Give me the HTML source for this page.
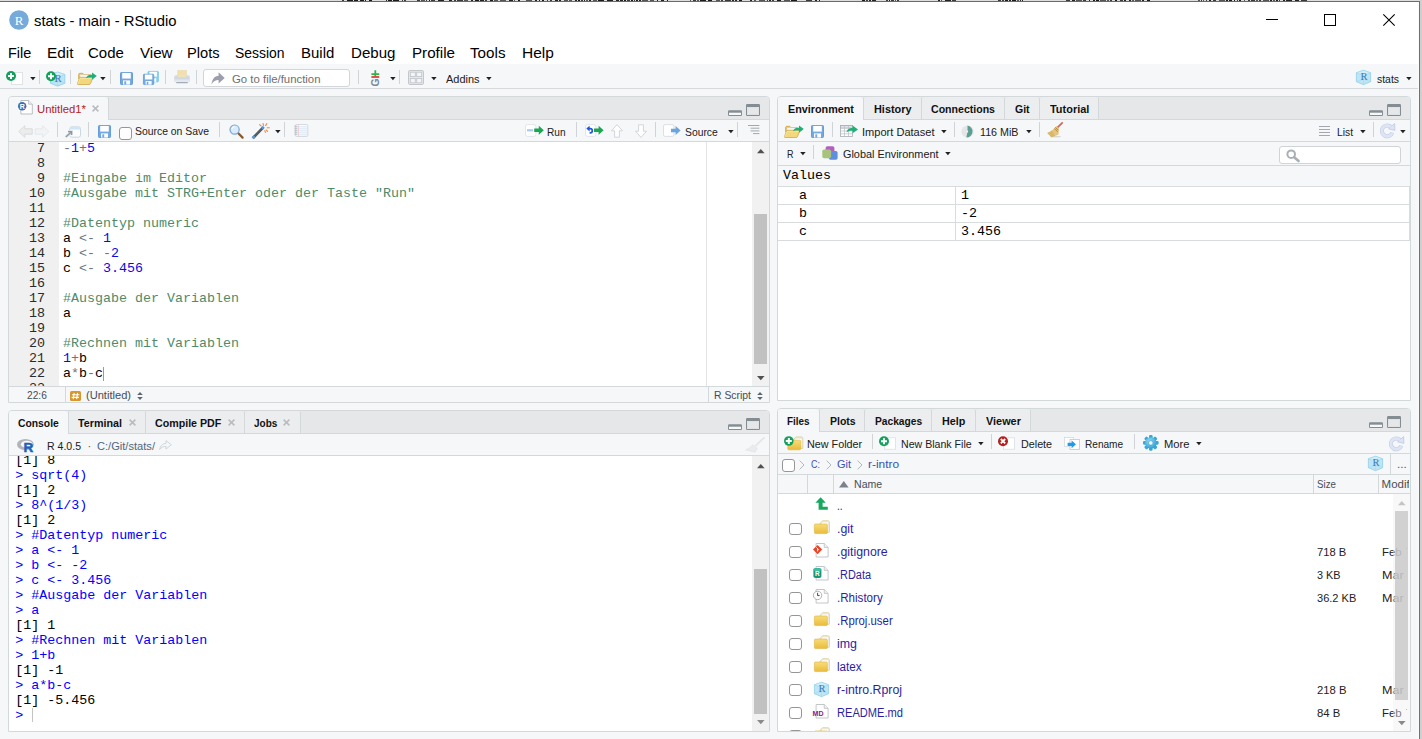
<!DOCTYPE html>
<html lang="de"><head><meta charset="utf-8"><title>stats - main - RStudio</title>
<style>
html,body{margin:0;padding:0}
body{width:1422px;height:739px;overflow:hidden;position:relative;background:#f5f7f9;font-family:"Liberation Sans",sans-serif}
#root{position:absolute;left:0;top:0;width:1422px;height:739px;overflow:hidden}
#root div,#root svg,#root span{position:absolute}
#root div{box-sizing:border-box}
.t{white-space:pre;line-height:20px;height:20px;transform-origin:0 50%}
.ts{font-family:"Liberation Sans",sans-serif}
.tb{font-family:"Liberation Sans",sans-serif;font-weight:bold}
.tm{font-family:"Liberation Mono",monospace}
svg{overflow:visible}
</style></head>
<body><div id="root">
<svg width="0" height="0" style="left:0;top:0"><defs><linearGradient id="fg" x1="0" y1="0" x2="0" y2="1"><stop offset="0" stop-color="#f8dd78"/><stop offset="1" stop-color="#e9bb3b"/></linearGradient><radialGradient id="gg" cx=".4" cy=".35" r=".7"><stop offset="0" stop-color="#8fdcf2"/><stop offset="1" stop-color="#2f9dd0"/></radialGradient></defs></svg>
<div style="left:0px;top:0px;width:1422px;height:64px;background:#fff;"></div>
<div style="left:0px;top:0px;width:1422px;height:1px;background:#dedede;"></div>
<div style="left:342px;top:0px;width:2px;height:1px;background:#3a3a3a;"></div>
<div style="left:347px;top:0px;width:6px;height:1px;background:#1a1a1a;"></div>
<div style="left:354px;top:0px;width:4px;height:1px;background:#1a1a1a;"></div>
<div style="left:360px;top:0px;width:4px;height:1px;background:#1a1a1a;"></div>
<div style="left:365px;top:0px;width:1px;height:1px;background:#1a1a1a;"></div>
<div style="left:369px;top:0px;width:3px;height:1px;background:#1a1a1a;"></div>
<div style="left:386px;top:0px;width:1px;height:1px;background:#222;"></div>
<div style="left:388px;top:0px;width:4px;height:1px;background:#1a1a1a;"></div>
<div style="left:393px;top:0px;width:6px;height:1px;background:#1a1a1a;"></div>
<div style="left:402px;top:0px;width:1px;height:1px;background:#3a3a3a;"></div>
<div style="left:404px;top:0px;width:2px;height:1px;background:#3a3a3a;"></div>
<div style="left:417px;top:0px;width:3px;height:1px;background:#3a3a3a;"></div>
<div style="left:421px;top:0px;width:4px;height:1px;background:#555;"></div>
<div style="left:426px;top:0px;width:1px;height:1px;background:#3a3a3a;"></div>
<div style="left:429px;top:0px;width:1px;height:1px;background:#1a1a1a;"></div>
<div style="left:431px;top:0px;width:4px;height:1px;background:#3a3a3a;"></div>
<div style="left:438px;top:0px;width:6px;height:1px;background:#222;"></div>
<div style="left:449px;top:0px;width:3px;height:1px;background:#222;"></div>
<div style="left:454px;top:0px;width:2px;height:1px;background:#3a3a3a;"></div>
<div style="left:457px;top:0px;width:6px;height:1px;background:#3a3a3a;"></div>
<div style="left:464px;top:0px;width:4px;height:1px;background:#555;"></div>
<div style="left:471px;top:0px;width:2px;height:1px;background:#222;"></div>
<div style="left:475px;top:0px;width:4px;height:1px;background:#1a1a1a;"></div>
<div style="left:480px;top:0px;width:4px;height:1px;background:#222;"></div>
<div style="left:485px;top:0px;width:2px;height:1px;background:#3a3a3a;"></div>
<div style="left:490px;top:0px;width:3px;height:1px;background:#1a1a1a;"></div>
<div style="left:494px;top:0px;width:4px;height:1px;background:#555;"></div>
<div style="left:500px;top:0px;width:6px;height:1px;background:#555;"></div>
<div style="left:509px;top:0px;width:4px;height:1px;background:#222;"></div>
<div style="left:514px;top:0px;width:1px;height:1px;background:#555;"></div>
<div style="left:518px;top:0px;width:2px;height:1px;background:#1a1a1a;"></div>
<div style="left:526px;top:0px;width:6px;height:1px;background:#555;"></div>
<div style="left:535px;top:0px;width:2px;height:1px;background:#222;"></div>
<div style="left:539px;top:0px;width:1px;height:1px;background:#222;"></div>
<div style="left:542px;top:0px;width:2px;height:1px;background:#1a1a1a;"></div>
<div style="left:547px;top:0px;width:1px;height:1px;background:#3a3a3a;"></div>
<div style="left:550px;top:0px;width:2px;height:1px;background:#3a3a3a;"></div>
<div style="left:555px;top:0px;width:3px;height:1px;background:#222;"></div>
<div style="left:559px;top:0px;width:2px;height:1px;background:#222;"></div>
<div style="left:564px;top:0px;width:4px;height:1px;background:#555;"></div>
<div style="left:569px;top:0px;width:3px;height:1px;background:#555;"></div>
<div style="left:575px;top:0px;width:2px;height:1px;background:#222;"></div>
<div style="left:578px;top:0px;width:2px;height:1px;background:#1a1a1a;"></div>
<div style="left:581px;top:0px;width:2px;height:1px;background:#3a3a3a;"></div>
<div style="left:584px;top:0px;width:1px;height:1px;background:#222;"></div>
<div style="left:586px;top:0px;width:2px;height:1px;background:#555;"></div>
<div style="left:589px;top:0px;width:2px;height:1px;background:#222;"></div>
<div style="left:593px;top:0px;width:4px;height:1px;background:#555;"></div>
<div style="left:598px;top:0px;width:6px;height:1px;background:#1a1a1a;"></div>
<div style="left:607px;top:0px;width:6px;height:1px;background:#222;"></div>
<div style="left:616px;top:0px;width:3px;height:1px;background:#222;"></div>
<div style="left:620px;top:0px;width:3px;height:1px;background:#222;"></div>
<div style="left:624px;top:0px;width:2px;height:1px;background:#1a1a1a;"></div>
<div style="left:627px;top:0px;width:3px;height:1px;background:#3a3a3a;"></div>
<div style="left:631px;top:0px;width:2px;height:1px;background:#1a1a1a;"></div>
<div style="left:634px;top:0px;width:1px;height:1px;background:#3a3a3a;"></div>
<div style="left:636px;top:0px;width:2px;height:1px;background:#1a1a1a;"></div>
<div style="left:639px;top:0px;width:2px;height:1px;background:#222;"></div>
<div style="left:642px;top:0px;width:6px;height:1px;background:#555;"></div>
<div style="left:650px;top:0px;width:4px;height:1px;background:#555;"></div>
<div style="left:657px;top:0px;width:1px;height:1px;background:#1a1a1a;"></div>
<div style="left:661px;top:0px;width:3px;height:1px;background:#222;"></div>
<div style="left:667px;top:0px;width:1px;height:1px;background:#1a1a1a;"></div>
<div style="left:690px;top:0px;width:1px;height:1px;background:#555;"></div>
<div style="left:693px;top:0px;width:3px;height:1px;background:#3a3a3a;"></div>
<div style="left:697px;top:0px;width:2px;height:1px;background:#555;"></div>
<div style="left:700px;top:0px;width:6px;height:1px;background:#1a1a1a;"></div>
<div style="left:708px;top:0px;width:4px;height:1px;background:#1a1a1a;"></div>
<div style="left:716px;top:0px;width:4px;height:1px;background:#555;"></div>
<div style="left:721px;top:0px;width:2px;height:1px;background:#3a3a3a;"></div>
<div style="left:725px;top:0px;width:6px;height:1px;background:#3a3a3a;"></div>
<div style="left:732px;top:0px;width:2px;height:1px;background:#222;"></div>
<div style="left:735px;top:0px;width:2px;height:1px;background:#222;"></div>
<div style="left:739px;top:0px;width:3px;height:1px;background:#1a1a1a;"></div>
<div style="left:750px;top:0px;width:2px;height:1px;background:#222;"></div>
<div style="left:754px;top:0px;width:2px;height:1px;background:#555;"></div>
<div style="left:759px;top:0px;width:6px;height:1px;background:#555;"></div>
<div style="left:767px;top:0px;width:1px;height:1px;background:#3a3a3a;"></div>
<div style="left:769px;top:0px;width:2px;height:1px;background:#222;"></div>
<div style="left:772px;top:0px;width:2px;height:1px;background:#3a3a3a;"></div>
<div style="left:777px;top:0px;width:4px;height:1px;background:#1a1a1a;"></div>
<div style="left:784px;top:0px;width:6px;height:1px;background:#555;"></div>
<div style="left:791px;top:0px;width:6px;height:1px;background:#1a1a1a;"></div>
<div style="left:806px;top:0px;width:6px;height:1px;background:#3a3a3a;"></div>
<div style="left:815px;top:0px;width:2px;height:1px;background:#222;"></div>
<div style="left:819px;top:0px;width:1px;height:1px;background:#222;"></div>
<div style="left:862px;top:0px;width:3px;height:1px;background:#1a1a1a;"></div>
<div style="left:866px;top:0px;width:2px;height:1px;background:#3a3a3a;"></div>
<div style="left:869px;top:0px;width:2px;height:1px;background:#222;"></div>
<div style="left:872px;top:0px;width:4px;height:1px;background:#222;"></div>
<div style="left:886px;top:0px;width:2px;height:1px;background:#3a3a3a;"></div>
<div style="left:889px;top:0px;width:1px;height:1px;background:#1a1a1a;"></div>
<div style="left:891px;top:0px;width:3px;height:1px;background:#3a3a3a;"></div>
<div style="left:895px;top:0px;width:1px;height:1px;background:#555;"></div>
<div style="left:897px;top:0px;width:2px;height:1px;background:#3a3a3a;"></div>
<div style="left:938px;top:0px;width:2px;height:1px;background:#222;"></div>
<div style="left:941px;top:0px;width:1px;height:1px;background:#555;"></div>
<div style="left:945px;top:0px;width:6px;height:1px;background:#222;"></div>
<div style="left:952px;top:0px;width:4px;height:1px;background:#3a3a3a;"></div>
<div style="left:998px;top:0px;width:3px;height:1px;background:#3a3a3a;"></div>
<div style="left:1002px;top:0px;width:2px;height:1px;background:#3a3a3a;"></div>
<div style="left:1005px;top:0px;width:3px;height:1px;background:#1a1a1a;"></div>
<div style="left:1009px;top:0px;width:2px;height:1px;background:#222;"></div>
<div style="left:1012px;top:0px;width:4px;height:1px;background:#1a1a1a;"></div>
<div style="left:1017px;top:0px;width:2px;height:1px;background:#555;"></div>
<div style="left:1020px;top:0px;width:1px;height:1px;background:#222;"></div>
<div style="left:1022px;top:0px;width:1px;height:1px;background:#222;"></div>
<div style="left:1066px;top:0px;width:4px;height:1px;background:#3a3a3a;"></div>
<div style="left:1072px;top:0px;width:3px;height:1px;background:#222;"></div>
<div style="left:1076px;top:0px;width:6px;height:1px;background:#555;"></div>
<div style="left:1083px;top:0px;width:3px;height:1px;background:#3a3a3a;"></div>
<div style="left:1089px;top:0px;width:1px;height:1px;background:#222;"></div>
<div style="left:1093px;top:0px;width:2px;height:1px;background:#1a1a1a;"></div>
<div style="left:1096px;top:0px;width:3px;height:1px;background:#1a1a1a;"></div>
<div style="left:1100px;top:0px;width:6px;height:1px;background:#555;"></div>
<div style="left:1107px;top:0px;width:2px;height:1px;background:#555;"></div>
<div style="left:1110px;top:0px;width:2px;height:1px;background:#3a3a3a;"></div>
<div style="left:1115px;top:0px;width:2px;height:1px;background:#1a1a1a;"></div>
<div style="left:1120px;top:0px;width:3px;height:1px;background:#3a3a3a;"></div>
<div style="left:1124px;top:0px;width:2px;height:1px;background:#222;"></div>
<div style="left:1129px;top:0px;width:2px;height:1px;background:#222;"></div>
<div style="left:1132px;top:0px;width:2px;height:1px;background:#555;"></div>
<div style="left:1135px;top:0px;width:6px;height:1px;background:#555;"></div>
<div style="left:1142px;top:0px;width:2px;height:1px;background:#222;"></div>
<div style="left:1147px;top:0px;width:3px;height:1px;background:#1a1a1a;"></div>
<div style="left:1198px;top:0px;width:2px;height:1px;background:#555;"></div>
<div style="left:1201px;top:0px;width:1px;height:1px;background:#3a3a3a;"></div>
<div style="left:1203px;top:0px;width:1px;height:1px;background:#555;"></div>
<div style="left:1206px;top:0px;width:1px;height:1px;background:#3a3a3a;"></div>
<div style="left:1209px;top:0px;width:2px;height:1px;background:#222;"></div>
<div style="left:1213px;top:0px;width:3px;height:1px;background:#3a3a3a;"></div>
<div style="left:1219px;top:0px;width:6px;height:1px;background:#555;"></div>
<div style="left:1226px;top:0px;width:2px;height:1px;background:#1a1a1a;"></div>
<div style="left:1229px;top:0px;width:3px;height:1px;background:#1a1a1a;"></div>
<div style="left:1234px;top:0px;width:1px;height:1px;background:#1a1a1a;"></div>
<div style="left:1237px;top:0px;width:1px;height:1px;background:#3a3a3a;"></div>
<div style="left:1239px;top:0px;width:2px;height:1px;background:#1a1a1a;"></div>
<div style="left:1244px;top:0px;width:1px;height:1px;background:#555;"></div>
<div style="left:1248px;top:0px;width:2px;height:1px;background:#3a3a3a;"></div>
<div style="left:1251px;top:0px;width:4px;height:1px;background:#3a3a3a;"></div>
<div style="left:1256px;top:0px;width:2px;height:1px;background:#555;"></div>
<div style="left:1259px;top:0px;width:2px;height:1px;background:#3a3a3a;"></div>
<div style="left:1263px;top:0px;width:6px;height:1px;background:#555;"></div>
<div style="left:1270px;top:0px;width:2px;height:1px;background:#222;"></div>
<div style="left:1273px;top:0px;width:2px;height:1px;background:#555;"></div>
<div style="left:1276px;top:0px;width:2px;height:1px;background:#1a1a1a;"></div>
<div style="left:1279px;top:0px;width:1px;height:1px;background:#3a3a3a;"></div>
<div style="left:1283px;top:0px;width:2px;height:1px;background:#222;"></div>
<div style="left:1286px;top:0px;width:6px;height:1px;background:#222;"></div>
<div style="left:1295px;top:0px;width:4px;height:1px;background:#222;"></div>
<div style="left:1301px;top:0px;width:6px;height:1px;background:#3a3a3a;"></div>
<div style="left:0px;top:1px;width:1420px;height:1px;background:#6a6a6a;"></div>
<div style="left:1418px;top:2px;width:1px;height:737px;background:#fbfbfb;"></div>
<div style="left:1419px;top:1px;width:1px;height:738px;background:#707070;"></div>
<div style="left:1420px;top:0px;width:2px;height:739px;background:#cfcfcf;"></div>
<svg style="left:9px;top:10px;" width="20" height="20" viewBox="0 0 20 20"><circle cx="10" cy="10" r="9.800" fill="#75aadb"/><text x="10.200" y="14.600" font-family="Liberation Serif,serif" font-size="13" text-anchor="middle" fill="#fff">R</text></svg>
<span id="t0" class="t ts" style="left:34px;top:10.80px;font-size:15px;color:#000;transform:scaleX(0.9881);">stats - main - RStudio</span>
<div style="left:1266px;top:19px;width:12px;height:1px;background:#000;"></div>
<div style="left:1324px;top:14px;width:12px;height:12px;background:transparent;border:1px solid #000"></div>
<svg style="left:1383px;top:14px;" width="12" height="12" viewBox="0 0 12 12"><path d="M0.300 0.300L11.700 11.700M11.700 0.300L0.300 11.700" stroke="#000" stroke-width="1.100"/></svg>
<span id="t1" class="t ts" style="left:7.500000000000001px;top:42.87px;font-size:14.5px;color:#000;transform:scaleX(0.9968);">File</span>
<span id="t2" class="t ts" style="left:46.5px;top:42.87px;font-size:14.5px;color:#000;transform:scaleX(1.0600);">Edit</span>
<span id="t3" class="t ts" style="left:88.2px;top:42.87px;font-size:14.5px;color:#000;transform:scaleX(1.0325);">Code</span>
<span id="t4" class="t ts" style="left:139.5px;top:42.87px;font-size:14.5px;color:#000;transform:scaleX(1.0426);">View</span>
<span id="t5" class="t ts" style="left:187.39999999999998px;top:42.87px;font-size:14.5px;color:#000;transform:scaleX(1.0109);">Plots</span>
<span id="t6" class="t ts" style="left:235.2px;top:42.87px;font-size:14.5px;color:#000;transform:scaleX(0.9614);">Session</span>
<span id="t7" class="t ts" style="left:300.9px;top:42.87px;font-size:14.5px;color:#000;transform:scaleX(1.0326);">Build</span>
<span id="t8" class="t ts" style="left:350.9px;top:42.87px;font-size:14.5px;color:#000;transform:scaleX(1.0390);">Debug</span>
<span id="t9" class="t ts" style="left:411.5px;top:42.87px;font-size:14.5px;color:#000;transform:scaleX(1.0460);">Profile</span>
<span id="t10" class="t ts" style="left:470.2px;top:42.87px;font-size:14.5px;color:#000;transform:scaleX(1.0485);">Tools</span>
<span id="t11" class="t ts" style="left:521.9000000000001px;top:42.87px;font-size:14.5px;color:#000;transform:scaleX(1.0661);">Help</span>
<div style="left:0px;top:88px;width:1418px;height:1px;background:#d6dadd;"></div>
<svg style="left:6px;top:71px;" width="17" height="14" viewBox="0 0 17 14"><rect x="5.5" y="1.5" width="11" height="12" fill="#fff" stroke="#dfe3e6"/><circle cx="5" cy="5" r="5" fill="#13a05a"/><path d="M2 4h2v-2h2v2h2v2h-2v2h-2v-2h-2z" fill="#fff"/></svg>
<svg style="left:30px;top:77px;" width="6" height="4" viewBox="0 0 6 4"><path d="M0.200 0H5.600L2.900 3.300z" fill="#222"/></svg>
<div style="left:39px;top:70px;width:1px;height:14px;background:#d0d4d7;"></div>
<svg style="left:46px;top:70px;" width="20" height="17" viewBox="0 0 20 17"><g transform="translate(4,1.800) scale(1.020,.98)"><g opacity="1"><path d="M7.500 0.300L14.600 2.800v8.900L7.500 14.700L0.400 11.700V2.800z" fill="#bfe5f4" stroke="#86cbe8" stroke-width=".7"/><path d="M0.400 2.800L7.500 5.400L14.600 2.800L7.500 0.300z" fill="#d2eef8" stroke="#93d2ec" stroke-width=".5"/><path d="M7.500 5.400V14.700M0.400 11.700L7.500 9.200L14.600 11.700" fill="none" stroke="#9bd6ee" stroke-width=".5"/><text x="7.900" y="10.100" font-family="Liberation Serif,serif" font-size="10.500" text-anchor="middle" fill="#3b78b8">R</text></g></g><circle cx="5" cy="6.2" r="5" fill="#13a05a"/><path d="M2 5.2h2v-2h2v2h2v2h-2v2h-2v-2h-2z" fill="#fff"/></svg>
<div style="left:70px;top:70px;width:1px;height:14px;background:#d0d4d7;"></div>
<svg style="left:77px;top:72px;" width="20" height="13" viewBox="0 0 20 13"><path d="M1.600 2.600c0-.8.500-1.300 1.200-1.300h3l1.300 1.300h5.700c.7 0 1.100.4 1.100 1.100v3H1.600z" fill="#e6c463" stroke="#c8a23e" stroke-width=".7"/><rect x="3" y="2.800" width="9.600" height="4" fill="#f4f4f2" stroke="#d6d6d2" stroke-width=".4"/><path d="M3 5.400h11.800c.7 0 .9.400.7 1l-2 5.200c-.2.600-.6.900-1.300.9H1.100c-.6 0-.9-.4-.6-1l1.800-5.300c.1-.5.300-.8.700-.8z" fill="#f3d77c" stroke="#c9a13a" stroke-width=".7"/><path d="M1 12l2-5.600h11.800" fill="none" stroke="#f9e9a8" stroke-width=".7"/><path d="M9 6.200c1-2.800 3.400-3.800 6-3.400V0.400l4.800 3.700l-4.800 3.700V5.500c-2.200-.4-4-.3-6 .7z" fill="#1fae78"/></svg>
<svg style="left:100px;top:77px;" width="6" height="4" viewBox="0 0 6 4"><path d="M0.200 0H5.600L2.900 3.300z" fill="#222"/></svg>
<div style="left:110px;top:70px;width:1px;height:14px;background:#d0d4d7;"></div>
<svg style="left:120px;top:72px;" width="13" height="13" viewBox="0 0 13 13"><rect x="0.500" y="0.500" width="12" height="12" rx=".8" fill="#74a8df" stroke="#5e97d6" stroke-width=".9"/><rect x="2.200" y="0.900" width="8.600" height="5.700" fill="#fdfeff"/><rect x="3" y="8.400" width="7" height="4.200" fill="#fdfeff"/><rect x="4.300" y="9.300" width="1.900" height="3.300" fill="#74a8df"/></svg>
<svg style="left:143px;top:71px;" width="16" height="14" viewBox="0 0 16 14"><g transform="translate(4.600,0) scale(.86)"><rect x="0.500" y="0.500" width="12" height="12" rx=".8" fill="#86d3f2" stroke="#6cbfe6" stroke-width=".9"/><rect x="2.200" y="0.900" width="8.600" height="5.700" fill="#fdfeff"/><rect x="3" y="8.400" width="7" height="4.200" fill="#fdfeff"/><rect x="4.300" y="9.300" width="1.900" height="3.300" fill="#86d3f2"/></g><g transform="translate(0,2.800) scale(.86)"><rect x="0.500" y="0.500" width="12" height="12" rx=".8" fill="#74a8df" stroke="#5e97d6" stroke-width=".9"/><rect x="2.200" y="0.900" width="8.600" height="5.700" fill="#fdfeff"/><rect x="3" y="8.400" width="7" height="4.200" fill="#fdfeff"/><rect x="4.300" y="9.300" width="1.900" height="3.300" fill="#74a8df"/></g></svg>
<div style="left:165px;top:70px;width:1px;height:14px;background:#d0d4d7;"></div>
<svg style="left:174px;top:70px;" width="16" height="14" viewBox="0 0 16 14"><rect x="3.800" y="0.400" width="8.600" height="6.800" fill="#f1dfae" stroke="#e6d6a6" stroke-width=".5"/><path d="M2.400 5.200h11.200c1.400 0 2.200.8 2.200 2.200v3.200c0 1-.6 1.600-1.600 1.600H1.800c-1 0-1.600-.6-1.600-1.600V7.400c0-1.400.8-2.200 2.200-2.200z" fill="#d3d9e2"/><rect x="3.800" y="5" width="8.600" height="2.200" fill="#f0e2b8"/><path d="M0.400 9.400h15.200v1.400c0 .9-.6 1.400-1.400 1.400H1.800c-.8 0-1.400-.5-1.400-1.400z" fill="#e4e8ee"/><rect x="2.200" y="12" width="11.600" height="1.300" rx=".5" fill="#a3acb8"/></svg>
<div style="left:196px;top:70px;width:1px;height:14px;background:#d0d4d7;"></div>
<div style="left:203px;top:69px;width:147px;height:18px;background:#fff;border:1px solid #d2d6d9;border-radius:3px"></div>
<svg style="left:211px;top:72px;" width="14" height="13" viewBox="0 0 14 13"><path d="M0.500 12.400C1.200 6.800 3.800 4 7.600 3.800V0.300L13.700 5.900L7.600 11.400V8C4.800 7.900 2.600 9 0.500 12.400z" fill="#9b9fad"/></svg>
<span id="t12" class="t ts" style="left:232px;top:68.61px;font-size:11.5px;color:#6e6e6e;transform:scaleX(0.9888);">Go to file/function</span>
<div style="left:358px;top:70px;width:1px;height:14px;background:#d0d4d7;"></div>
<svg style="left:371px;top:70px;" width="9" height="16" viewBox="0 0 9 16"><path d="M0.400 3.300h3V0.300h1.800v3h3v1.700h-3v1.200H3.400V5H0.400z" fill="#2db34a"/><rect x="0.400" y="6.100" width="7.800" height="1.800" fill="#e23b3f"/><text transform="translate(8.300,16.500) rotate(-90)" font-family="Liberation Sans,sans-serif" font-weight="bold" font-size="10.500" fill="#77889b">G</text></svg>
<svg style="left:390px;top:77px;" width="6" height="4" viewBox="0 0 6 4"><path d="M0.200 0H5.600L2.900 3.300z" fill="#222"/></svg>
<div style="left:399px;top:70px;width:1px;height:14px;background:#d0d4d7;"></div>
<svg style="left:408px;top:70px;" width="16" height="15" viewBox="0 0 16 15"><rect x="0.500" y="0.500" width="15" height="14" rx="1.400" fill="#e6e8eb" stroke="#c3c7cc"/><g fill="#f3f5f7" stroke="#bfc4c9" stroke-width=".8"><rect x="2.300" y="2.200" width="5" height="4.400"/><rect x="8.700" y="2.200" width="5" height="4.400"/><rect x="2.300" y="8.400" width="5" height="4.400"/><rect x="8.700" y="8.400" width="5" height="4.400"/></g></svg>
<svg style="left:430.5px;top:77px;" width="6" height="4" viewBox="0 0 6 4"><path d="M0.200 0H5.600L2.900 3.300z" fill="#222"/></svg>
<span id="t13" class="t ts" style="left:445.5px;top:68.61px;font-size:11.5px;color:#202020;transform:scaleX(0.9525);">Addins</span>
<svg style="left:485.5px;top:77px;" width="6" height="4" viewBox="0 0 6 4"><path d="M0.200 0H5.600L2.900 3.300z" fill="#222"/></svg>
<svg style="left:1356px;top:70px;" width="15" height="15" viewBox="0 0 15 15"><g opacity="1"><path d="M7.500 0.300L14.600 2.800v8.900L7.500 14.700L0.400 11.700V2.800z" fill="#bfe5f4" stroke="#86cbe8" stroke-width=".7"/><path d="M0.400 2.800L7.500 5.400L14.600 2.800L7.500 0.300z" fill="#d2eef8" stroke="#93d2ec" stroke-width=".5"/><path d="M7.500 5.400V14.700M0.400 11.700L7.500 9.200L14.600 11.700" fill="none" stroke="#9bd6ee" stroke-width=".5"/><text x="7.900" y="10.100" font-family="Liberation Serif,serif" font-size="10.500" text-anchor="middle" fill="#3b78b8">R</text></g></svg>
<span id="t14" class="t ts" style="left:1376.5px;top:68.61px;font-size:11.5px;color:#202020;transform:scaleX(0.9055);">stats</span>
<svg style="left:1405.5px;top:77px;" width="6" height="4" viewBox="0 0 6 4"><path d="M0.200 0H5.600L2.900 3.300z" fill="#222"/></svg>
<div style="left:8px;top:96px;width:762px;height:307px;background:#fff;border:1px solid #d3d8db;border-radius:4px 4px 0 0"></div>
<div style="left:9px;top:97px;width:760px;height:22px;background:#e6e7e9;border-radius:3px 3px 0 0"></div>
<div style="left:9px;top:119px;width:760px;height:1px;background:#d3d8db;"></div>
<div style="left:9px;top:97px;width:99px;height:23px;background:#f5f7f9;border-radius:3px 3px 0 0"></div>
<div style="left:108px;top:98px;width:1px;height:22px;background:#d3d8db;"></div>
<span id="t15" class="t ts" style="left:37.3px;top:99.01px;font-size:11.5px;color:#b22222;transform:scaleX(0.9825);">Untitled1*</span>
<svg style="left:91.5px;top:105.3px;" width="7" height="7" viewBox="0 0 7 7"><path d="M0.600 0.600L6.400 6.400M6.400 0.600L0.600 6.400" stroke="#b9bcbf" stroke-width="1.500"/></svg>
<svg style="left:18px;top:100px;" width="15" height="15" viewBox="0 0 15 15"><g transform="translate(2.4,0)"><path d="M0.5 0.5H8.2L11.9 4.2V14.0H0.5z" fill="#fff" stroke="#a9aeb3" stroke-width=".8"/><path d="M8.2 0.5V4.2H11.9" fill="#eef0f2" stroke="#a9aeb3" stroke-width=".7"/></g><circle cx="4.2" cy="6.2" r="4.2" fill="#3f6fb3"/><text x="4.3" y="8.8" font-family="Liberation Sans,sans-serif" font-weight="bold" font-size="7" text-anchor="middle" fill="#fff">R</text></svg>
<svg style="left:728px;top:104px;" width="32" height="12" viewBox="0 0 32 12"><rect x="0" y="6.200" width="14" height="5.800" rx="1.200" fill="#838d93"/><rect x="1" y="8.700" width="12" height="2.300" fill="#f6f7f8"/><rect x="18" y="0" width="14" height="12" rx="1.200" fill="#838d93"/><rect x="19.300" y="3.300" width="11.400" height="7.400" fill="#e6e7e8" stroke="#eff0f1" stroke-width=".6"/></svg>
<div style="left:9px;top:120px;width:760px;height:21px;background:#f5f7f9;"></div>
<div style="left:9px;top:141px;width:760px;height:1px;background:#d3d8db;"></div>
<svg style="left:18px;top:125px;" width="32" height="13" viewBox="0 0 32 13"><path d="M0.700 6.500L6.800 0.700V3.800h7.400v5.400H6.800v3.100z" fill="#ececec" stroke="#d8d9da" stroke-width=".9"/><g transform="translate(31.500,0) scale(-1,1)"><path d="M0.700 6.500L6.800 0.700V3.800h7.400v5.400H6.800v3.100z" fill="#f1f3f4" stroke="#e4e6e8" stroke-width=".9"/></g></svg>
<div style="left:57px;top:122px;width:1px;height:15px;background:#d0d4d7;"></div>
<svg style="left:65px;top:125.5px;" width="16" height="12" viewBox="0 0 16 12"><rect x="4.800" y="0.800" width="10.700" height="10.400" rx="2" fill="#fbfcfd" stroke="#cfd6dd"/><path d="M4.800 3.600V2.800c0-1.200.8-2 2-2h6.700c1.200 0 2 .8 2 2v.8z" fill="#cfe5fa"/><path d="M0.800 11L6 6.200M3 5.600h3.600V9" fill="none" stroke="#dfe3e7" stroke-width="2.600"/><path d="M0.800 11L6 6.200M3 5.600h3.600V9" fill="none" stroke="#8f98a3" stroke-width="1.300"/></svg>
<div style="left:88px;top:122px;width:1px;height:15px;background:#d0d4d7;"></div>
<svg style="left:98px;top:125px;" width="13" height="13" viewBox="0 0 13 13"><rect x="0.500" y="0.500" width="12" height="12" rx=".8" fill="#74a8df" stroke="#5e97d6" stroke-width=".9"/><rect x="2.200" y="0.900" width="8.600" height="5.700" fill="#fdfeff"/><rect x="3" y="8.400" width="7" height="4.200" fill="#fdfeff"/><rect x="4.300" y="9.300" width="1.900" height="3.300" fill="#74a8df"/></svg>
<div style="left:119px;top:127px;width:12.5px;height:12.5px;background:#fff;border:1px solid #969696;border-radius:3px"></div>
<span id="t16" class="t ts" style="left:135px;top:121.01px;font-size:11.5px;color:#202020;transform:scaleX(0.9042);">Source on Save</span>
<div style="left:219px;top:122px;width:1px;height:15px;background:#d0d4d7;"></div>
<svg style="left:228.5px;top:123.5px;" width="15" height="15" viewBox="0 0 15 15"><path d="M8.8 8.8L13.6 13.6" stroke="#8a5a2b" stroke-width="2.2" stroke-linecap="round"/><circle cx="5.6" cy="5.6" r="4.6" fill="#d8ecfb" stroke="#7ea6cf" stroke-width="1.2"/><path d="M2.8 5a3 3 0 0 1 3-2.4" stroke="#fff" stroke-width="1" fill="none"/></svg>
<svg style="left:251.5px;top:122.5px;" width="18" height="16" viewBox="0 0 18 16"><path d="M1.200 14.800L11 4.600" stroke="#565b62" stroke-width="2.700" stroke-linecap="butt"/><path d="M0.600 15.400L2.600 13.300" stroke="#4f97dd" stroke-width="2.700"/><path d="M10 5.700L11.800 3.800" stroke="#4f97dd" stroke-width="2.700"/><g stroke="#f4894a" stroke-width="1.100" stroke-linecap="round"><path d="M11 0.500L11.600 2.400"/><path d="M14.800 0.600L13.600 2.600"/><path d="M17.400 4.800H15.200"/><path d="M15.600 8.400L14.200 7"/><path d="M7.600 1.600L9.200 3"/><path d="M12.800 7.800l.6 1.600"/></g></svg>
<svg style="left:275px;top:130px;" width="6" height="4" viewBox="0 0 6 4"><path d="M0.200 0H5.600L2.900 3.300z" fill="#222"/></svg>
<div style="left:284px;top:122px;width:1px;height:15px;background:#d0d4d7;"></div>
<svg style="left:293.5px;top:124px;" width="15" height="13" viewBox="0 0 15 13"><rect x="1.400" y="0.500" width="12.400" height="12" rx="1" fill="#fbfdff" stroke="#cdd1d6" stroke-width=".8"/><g stroke="#cfe0f3" stroke-width=".8"><path d="M2 2.800h11.400M2 4.800h11.400M2 6.800h11.400M2 8.800h11.400M2 10.800h11.400"/></g><path d="M4.400 0.800v11.400" stroke="#f3b6b0" stroke-width=".6"/><g stroke="#a8aeb5" stroke-width=".8"><path d="M0.400 2.200h2.800M0.400 4.200h2.800M0.400 6.200h2.800M0.400 8.200h2.800M0.400 10.200h2.800"/></g></svg>
<svg style="left:525px;top:124px;" width="19" height="13" viewBox="0 0 19 13"><rect x="0.500" y="0.600" width="10.400" height="11.800" rx="2" fill="#fff" stroke="#dcdfe3" stroke-width=".8"/><rect x="2" y="5.200" width="6" height="2.200" fill="#a8c8f0"/><path transform="translate(9.2,1.8) scale(1)" d="M0 2.700h4.600V0L9.600 4.500L4.600 9V6.300H0z" fill="#1ba651"/></svg>
<span id="t17" class="t ts" style="left:546.5px;top:121.81px;font-size:11.5px;color:#202020;transform:scaleX(0.8764);">Run</span>
<div style="left:576px;top:122px;width:1px;height:15px;background:#d0d4d7;"></div>
<svg style="left:584.5px;top:124px;" width="19" height="13" viewBox="0 0 19 13"><rect x="0.500" y="0.600" width="10.400" height="11.800" rx="2" fill="#fff" stroke="#dcdfe3" stroke-width=".8"/><path d="M3.600 4.600h1.600a2.100 2.100 0 0 1 0 4.200H4.600" fill="none" stroke="#1f55e0" stroke-width="1.700"/><path d="M1.300 4.600L4.600 1.700v5.800z" fill="#1f55e0"/><path transform="translate(9,1.8) scale(1)" d="M0 2.700h4.600V0L9.600 4.500L4.600 9V6.300H0z" fill="#1ba651"/></svg>
<svg style="left:611px;top:124px;" width="12" height="14" viewBox="0 0 12 14"><path d="M6 0.600L11.500 6.800H8.400v6.400H3.600V6.800H0.500z" fill="#fff" stroke="#cdd1d5" stroke-width=".9" stroke-linejoin="round"/></svg>
<svg style="left:635px;top:124px;" width="12" height="14" viewBox="0 0 12 14"><path transform="translate(0,14) scale(1,-1)" d="M6 0.600L11.500 6.800H8.400v6.400H3.600V6.800H0.500z" fill="#fff" stroke="#cdd1d5" stroke-width=".9" stroke-linejoin="round"/></svg>
<div style="left:655px;top:122px;width:1px;height:15px;background:#d0d4d7;"></div>
<svg style="left:663px;top:124px;" width="18" height="13" viewBox="0 0 18 13"><rect x="0.500" y="0.600" width="10.400" height="11.800" rx="1.600" fill="#fff" stroke="#d4d8dc" stroke-width=".8"/><path transform="translate(8,2) scale(1)" d="M0 2.700h4.600V0L9.600 4.500L4.600 9V6.300H0z" fill="#6aa5de"/></svg>
<span id="t18" class="t ts" style="left:684.5px;top:121.81px;font-size:11.5px;color:#202020;transform:scaleX(0.9002);">Source</span>
<svg style="left:727.5px;top:130px;" width="6" height="4" viewBox="0 0 6 4"><path d="M0.200 0H5.600L2.900 3.300z" fill="#222"/></svg>
<div style="left:737px;top:122px;width:1px;height:15px;background:#d0d4d7;"></div>
<svg style="left:748px;top:125px;" width="12" height="10" viewBox="0 0 12 10"><g stroke="#a3a8ad" stroke-width="1"><path d="M0 0.5h11.4M2.6 3.2h8.8M2.6 5.9h8.8M5 8.6h6.4"/></g></svg>
<div style="left:9px;top:142px;width:50px;height:244px;background:#f0f0f0;"></div>
<div style="left:706px;top:142px;width:1px;height:244px;background:#e4e4e4;"></div>
<div style="left:752px;top:142px;width:17px;height:244px;background:#f1f1f1;"></div>
<svg style="left:757px;top:148.8px;" width="8" height="5" viewBox="0 0 8 5"><path d="M0 4.200H7.600L3.800 0z" fill="#505050"/></svg>
<svg style="left:757px;top:375.5px;" width="8" height="5" viewBox="0 0 8 5"><path d="M0 0H7.600L3.800 4.200z" fill="#505050"/></svg>
<div style="left:754px;top:214px;width:13px;height:150px;background:#c1c1c1;"></div>
<div style="left:9px;top:142px;width:743px;height:244px;overflow:hidden">
<span id="t19" class="t tm" style="left:28px;top:-2.95px;font-size:13.333px;color:#2b2b2b;">7</span>
<span id="t20" class="t tm" style="left:54px;top:-2.95px;font-size:13.333px;color:#6b7680;">-</span>
<span id="t21" class="t tm" style="left:62px;top:-2.95px;font-size:13.333px;color:#0a0ae0;">1</span>
<span id="t22" class="t tm" style="left:70px;top:-2.95px;font-size:13.333px;color:#6b7680;">+</span>
<span id="t23" class="t tm" style="left:78px;top:-2.95px;font-size:13.333px;color:#0a0ae0;">5</span>
<span id="t24" class="t tm" style="left:28px;top:12.05px;font-size:13.333px;color:#2b2b2b;">8</span>
<span id="t25" class="t tm" style="left:28px;top:27.05px;font-size:13.333px;color:#2b2b2b;">9</span>
<span id="t26" class="t tm" style="left:54px;top:27.05px;font-size:13.333px;color:#4e8b6a;">#Eingabe im Editor</span>
<span id="t27" class="t tm" style="left:20px;top:42.05px;font-size:13.333px;color:#2b2b2b;">10</span>
<span id="t28" class="t tm" style="left:54px;top:42.05px;font-size:13.333px;color:#4e8b6a;">#Ausgabe mit STRG+Enter oder der Taste "Run"</span>
<span id="t29" class="t tm" style="left:20px;top:57.05px;font-size:13.333px;color:#2b2b2b;">11</span>
<span id="t30" class="t tm" style="left:20px;top:72.05px;font-size:13.333px;color:#2b2b2b;">12</span>
<span id="t31" class="t tm" style="left:54px;top:72.05px;font-size:13.333px;color:#4e8b6a;">#Datentyp numeric</span>
<span id="t32" class="t tm" style="left:20px;top:87.05px;font-size:13.333px;color:#2b2b2b;">13</span>
<span id="t33" class="t tm" style="left:54px;top:87.05px;font-size:13.333px;color:#000;">a </span>
<span id="t34" class="t tm" style="left:70px;top:87.05px;font-size:13.333px;color:#6b7680;">&lt;-</span>
<span id="t35" class="t tm" style="left:86px;top:87.05px;font-size:13.333px;color:#0a0ae0;"> 1</span>
<span id="t36" class="t tm" style="left:20px;top:102.05px;font-size:13.333px;color:#2b2b2b;">14</span>
<span id="t37" class="t tm" style="left:54px;top:102.05px;font-size:13.333px;color:#000;">b </span>
<span id="t38" class="t tm" style="left:70px;top:102.05px;font-size:13.333px;color:#6b7680;">&lt;-</span>
<span id="t39" class="t tm" style="left:86px;top:102.05px;font-size:13.333px;color:#6b7680;"> </span>
<span id="t40" class="t tm" style="left:94px;top:102.05px;font-size:13.333px;color:#6b7680;">-</span>
<span id="t41" class="t tm" style="left:102px;top:102.05px;font-size:13.333px;color:#0a0ae0;">2</span>
<span id="t42" class="t tm" style="left:20px;top:117.05px;font-size:13.333px;color:#2b2b2b;">15</span>
<span id="t43" class="t tm" style="left:54px;top:117.05px;font-size:13.333px;color:#000;">c </span>
<span id="t44" class="t tm" style="left:70px;top:117.05px;font-size:13.333px;color:#6b7680;">&lt;-</span>
<span id="t45" class="t tm" style="left:86px;top:117.05px;font-size:13.333px;color:#0a0ae0;"> 3.456</span>
<span id="t46" class="t tm" style="left:20px;top:132.05px;font-size:13.333px;color:#2b2b2b;">16</span>
<span id="t47" class="t tm" style="left:20px;top:147.05px;font-size:13.333px;color:#2b2b2b;">17</span>
<span id="t48" class="t tm" style="left:54px;top:147.05px;font-size:13.333px;color:#4e8b6a;">#Ausgabe der Variablen</span>
<span id="t49" class="t tm" style="left:20px;top:162.05px;font-size:13.333px;color:#2b2b2b;">18</span>
<span id="t50" class="t tm" style="left:54px;top:162.05px;font-size:13.333px;color:#000;">a</span>
<span id="t51" class="t tm" style="left:20px;top:177.05px;font-size:13.333px;color:#2b2b2b;">19</span>
<span id="t52" class="t tm" style="left:20px;top:192.05px;font-size:13.333px;color:#2b2b2b;">20</span>
<span id="t53" class="t tm" style="left:54px;top:192.05px;font-size:13.333px;color:#4e8b6a;">#Rechnen mit Variablen</span>
<span id="t54" class="t tm" style="left:20px;top:207.05px;font-size:13.333px;color:#2b2b2b;">21</span>
<span id="t55" class="t tm" style="left:54px;top:207.05px;font-size:13.333px;color:#0a0ae0;">1</span>
<span id="t56" class="t tm" style="left:62px;top:207.05px;font-size:13.333px;color:#6b7680;">+</span>
<span id="t57" class="t tm" style="left:70px;top:207.05px;font-size:13.333px;color:#000;">b</span>
<span id="t58" class="t tm" style="left:20px;top:222.05px;font-size:13.333px;color:#2b2b2b;">22</span>
<span id="t59" class="t tm" style="left:54px;top:222.05px;font-size:13.333px;color:#000;">a</span>
<span id="t60" class="t tm" style="left:62px;top:222.05px;font-size:13.333px;color:#6b7680;">*</span>
<span id="t61" class="t tm" style="left:70px;top:222.05px;font-size:13.333px;color:#000;">b</span>
<span id="t62" class="t tm" style="left:78px;top:222.05px;font-size:13.333px;color:#6b7680;">-</span>
<span id="t63" class="t tm" style="left:86px;top:222.05px;font-size:13.333px;color:#000;">c</span>
<span id="t64" class="t tm" style="left:20px;top:237.05px;font-size:13.333px;color:#2b2b2b;">23</span>
</div>
<div style="left:103px;top:367px;width:1px;height:14px;background:#9a9a9a;"></div>
<div style="left:9px;top:387px;width:760px;height:15px;background:#f5f7f9;"></div>
<div style="left:9px;top:386px;width:760px;height:1px;background:#d3d8db;"></div>
<span id="t65" class="t ts" style="left:26.5px;top:384.61px;font-size:11.5px;color:#434d57;transform:scaleX(0.8843);">22:6</span>
<div style="left:65px;top:387px;width:1px;height:15px;background:#d3d8db;"></div>
<svg style="left:70px;top:391px;" width="11" height="10" viewBox="0 0 11 10"><rect x="0" y="0" width="11" height="10" rx="1.600" fill="#d9962c"/><path d="M4.200 1.800L3.200 8.200M7.600 1.800L6.600 8.200M2 3.800h7.400M1.600 6.400h7.400" stroke="#fff" stroke-width="1.100"/></svg>
<span id="t66" class="t ts" style="left:86px;top:384.61px;font-size:11.5px;color:#434d57;transform:scaleX(0.9645);">(Untitled)</span>
<svg style="left:136.5px;top:392px;" width="6" height="8" viewBox="0 0 6 8"><path d="M0.200 3L3 0L5.800 3zM0.200 5L3 8L5.800 5z" fill="#5d6670"/></svg>
<div style="left:708px;top:387px;width:1px;height:15px;background:#d3d8db;"></div>
<span id="t67" class="t ts" style="left:714px;top:384.61px;font-size:11.5px;color:#434d57;transform:scaleX(0.9045);">R Script</span>
<svg style="left:756.5px;top:392px;" width="6" height="8" viewBox="0 0 6 8"><path d="M0.200 3L3 0L5.800 3zM0.200 5L3 8L5.800 5z" fill="#5d6670"/></svg>
<div style="left:8px;top:410px;width:762px;height:322px;background:#fff;border:1px solid #d3d8db;border-radius:4px 4px 0 0"></div>
<div style="left:9px;top:411px;width:760px;height:22px;background:#e6e7e9;border-radius:3px 3px 0 0"></div>
<div style="left:9px;top:433px;width:760px;height:1px;background:#d3d8db;"></div>
<div style="left:9px;top:411px;width:59px;height:23px;background:#f5f7f9;border-radius:3px 3px 0 0"></div>
<div style="left:68px;top:412px;width:1px;height:22px;background:#d3d8db;"></div>
<span id="t68" class="t tb" style="left:18px;top:413.01px;font-size:11.5px;color:#111;transform:scaleX(0.8992);">Console</span>
<div style="left:69px;top:411px;width:76px;height:22px;background:#ebedef;border-radius:3px 3px 0 0"></div>
<div style="left:145px;top:412px;width:1px;height:21px;background:#d3d8db;"></div>
<span id="t69" class="t tb" style="left:78.3px;top:413.01px;font-size:11.5px;color:#111;transform:scaleX(0.9346);">Terminal</span>
<svg style="left:128.5px;top:419.3px;" width="7" height="7" viewBox="0 0 7 7"><path d="M0.600 0.600L6.400 6.400M6.400 0.600L0.600 6.400" stroke="#b9bcbf" stroke-width="1.500"/></svg>
<div style="left:146px;top:411px;width:98px;height:22px;background:#ebedef;border-radius:3px 3px 0 0"></div>
<div style="left:244px;top:412px;width:1px;height:21px;background:#d3d8db;"></div>
<span id="t70" class="t tb" style="left:155px;top:413.01px;font-size:11.5px;color:#111;transform:scaleX(0.9265);">Compile PDF</span>
<svg style="left:227.5px;top:419.3px;" width="7" height="7" viewBox="0 0 7 7"><path d="M0.600 0.600L6.400 6.400M6.400 0.600L0.600 6.400" stroke="#b9bcbf" stroke-width="1.500"/></svg>
<div style="left:245px;top:411px;width:55px;height:22px;background:#ebedef;border-radius:3px 3px 0 0"></div>
<div style="left:300px;top:412px;width:1px;height:21px;background:#d3d8db;"></div>
<span id="t71" class="t tb" style="left:254px;top:413.01px;font-size:11.5px;color:#111;transform:scaleX(0.8680);">Jobs</span>
<svg style="left:283.3px;top:419.3px;" width="7" height="7" viewBox="0 0 7 7"><path d="M0.600 0.600L6.400 6.400M6.400 0.600L0.600 6.400" stroke="#b9bcbf" stroke-width="1.500"/></svg>
<svg style="left:728px;top:418px;" width="32" height="12" viewBox="0 0 32 12"><rect x="0" y="6.200" width="14" height="5.800" rx="1.200" fill="#838d93"/><rect x="1" y="8.700" width="12" height="2.300" fill="#f6f7f8"/><rect x="18" y="0" width="14" height="12" rx="1.200" fill="#838d93"/><rect x="19.300" y="3.300" width="11.400" height="7.400" fill="#e6e7e8" stroke="#eff0f1" stroke-width=".6"/></svg>
<div style="left:9px;top:434px;width:760px;height:21px;background:#f5f7f9;"></div>
<div style="left:9px;top:455px;width:760px;height:1px;background:#d3d8db;"></div>
<svg style="left:17px;top:439px;" width="17" height="13" viewBox="0 0 17 13"><ellipse cx="8.400" cy="5.500" rx="8.400" ry="5.500" fill="#b3b4b8"/><ellipse cx="9.800" cy="5.300" rx="5.900" ry="3.600" fill="#f5f7f9"/><text x="6.600" y="12.800" font-family="Liberation Sans,sans-serif" font-weight="bold" font-size="13.500" fill="#1c62bb" stroke="#1c62bb" stroke-width=".5">R</text></svg>
<span id="t72" class="t ts" style="left:46.5px;top:436.31px;font-size:11.5px;color:#202020;transform:scaleX(0.9170);">R 4.0.5</span>
<span id="t73" class="t ts" style="left:87.5px;top:436.31px;font-size:11.5px;color:#555;">·</span>
<span id="t74" class="t ts" style="left:97px;top:436.31px;font-size:11.5px;color:#51677d;transform:scaleX(0.9654);">C:/Git/stats/</span>
<svg style="left:159px;top:440px;" width="13" height="10" viewBox="0 0 13 10"><path d="M0.600 9.600C1.400 5.400 3.800 3.600 7 3.400V0.600L12.400 4.800L7 9V6.400C4.400 6.400 2.400 7.200 0.600 9.600z" fill="#f4f6f8" stroke="#cdd2d7" stroke-width=".9" stroke-linejoin="round"/></svg>
<svg style="left:745px;top:437px;" width="20" height="16" viewBox="0 0 20 16"><g opacity=".8"><path d="M19 0.800L11 8.400" stroke="#dfe2e6" stroke-width="1.600" stroke-linecap="round"/><path d="M7.600 7.800l4.600 3.400c-.6 1.800-1.200 2.800-2.200 4l-9.400-2.400c3-1 5.200-2.600 7-5z" fill="#e7e9ec" stroke="#d5d8dc" stroke-width=".5"/></g></svg>
<div style="left:752px;top:456px;width:17px;height:275px;background:#f1f1f1;"></div>
<svg style="left:757px;top:463.8px;" width="8" height="5" viewBox="0 0 8 5"><path d="M0 4.200H7.600L3.800 0z" fill="#505050"/></svg>
<svg style="left:757px;top:719.5px;" width="8" height="5" viewBox="0 0 8 5"><path d="M0 0H7.600L3.800 4.200z" fill="#8a8a8a"/></svg>
<div style="left:754px;top:569px;width:13px;height:145px;background:#c1c1c1;"></div>
<div style="left:9px;top:456px;width:743px;height:275px;overflow:hidden">
<span id="t75" class="t tm" style="left:6.300000000000001px;top:-5.15px;font-size:13.333px;color:#000;">[1] 8</span>
<span id="t76" class="t tm" style="left:6.300000000000001px;top:9.85px;font-size:13.333px;color:#0000ff;">&gt; sqrt(4)</span>
<span id="t77" class="t tm" style="left:6.300000000000001px;top:24.85px;font-size:13.333px;color:#000;">[1] 2</span>
<span id="t78" class="t tm" style="left:6.300000000000001px;top:39.85px;font-size:13.333px;color:#0000ff;">&gt; 8^(1/3)</span>
<span id="t79" class="t tm" style="left:6.300000000000001px;top:54.85px;font-size:13.333px;color:#000;">[1] 2</span>
<span id="t80" class="t tm" style="left:6.300000000000001px;top:69.85px;font-size:13.333px;color:#0000ff;">&gt; #Datentyp numeric</span>
<span id="t81" class="t tm" style="left:6.300000000000001px;top:84.85px;font-size:13.333px;color:#0000ff;">&gt; a &lt;- 1</span>
<span id="t82" class="t tm" style="left:6.300000000000001px;top:99.85px;font-size:13.333px;color:#0000ff;">&gt; b &lt;- -2</span>
<span id="t83" class="t tm" style="left:6.300000000000001px;top:114.85px;font-size:13.333px;color:#0000ff;">&gt; c &lt;- 3.456</span>
<span id="t84" class="t tm" style="left:6.300000000000001px;top:129.85px;font-size:13.333px;color:#0000ff;">&gt; #Ausgabe der Variablen</span>
<span id="t85" class="t tm" style="left:6.300000000000001px;top:144.85px;font-size:13.333px;color:#0000ff;">&gt; a</span>
<span id="t86" class="t tm" style="left:6.300000000000001px;top:159.85px;font-size:13.333px;color:#000;">[1] 1</span>
<span id="t87" class="t tm" style="left:6.300000000000001px;top:174.85px;font-size:13.333px;color:#0000ff;">&gt; #Rechnen mit Variablen</span>
<span id="t88" class="t tm" style="left:6.300000000000001px;top:189.85px;font-size:13.333px;color:#0000ff;">&gt; 1+b</span>
<span id="t89" class="t tm" style="left:6.300000000000001px;top:204.85px;font-size:13.333px;color:#000;">[1] -1</span>
<span id="t90" class="t tm" style="left:6.300000000000001px;top:219.85px;font-size:13.333px;color:#0000ff;">&gt; a*b-c</span>
<span id="t91" class="t tm" style="left:6.300000000000001px;top:234.85px;font-size:13.333px;color:#000;">[1] -5.456</span>
<span id="t92" class="t tm" style="left:6.300000000000001px;top:249.85px;font-size:13.333px;color:#0000ff;">&gt; </span>
</div>
<div style="left:32px;top:708px;width:1px;height:14px;background:#c4c4c4;"></div>
<div style="left:777px;top:96px;width:634px;height:305px;background:#fff;border:1px solid #d3d8db;border-radius:4px 4px 0 0"></div>
<div style="left:778px;top:97px;width:632px;height:22px;background:#e6e7e9;border-radius:3px 3px 0 0"></div>
<div style="left:778px;top:119px;width:632px;height:1px;background:#d3d8db;"></div>
<div style="left:778px;top:97px;width:85px;height:23px;background:#f5f7f9;border-radius:3px 3px 0 0"></div>
<div style="left:863px;top:98px;width:1px;height:22px;background:#d3d8db;"></div>
<span id="t93" class="t tb" style="left:787.6px;top:99.01px;font-size:11.5px;color:#111;transform:scaleX(0.9375);">Environment</span>
<div style="left:864px;top:97px;width:57px;height:22px;background:#ebedef;border-radius:3px 3px 0 0"></div>
<div style="left:921px;top:98px;width:1px;height:21px;background:#d3d8db;"></div>
<span id="t94" class="t tb" style="left:873.5px;top:99.01px;font-size:11.5px;color:#111;transform:scaleX(0.9464);">History</span>
<div style="left:922px;top:97px;width:82px;height:22px;background:#ebedef;border-radius:3px 3px 0 0"></div>
<div style="left:1004px;top:98px;width:1px;height:21px;background:#d3d8db;"></div>
<span id="t95" class="t tb" style="left:931.3px;top:99.01px;font-size:11.5px;color:#111;transform:scaleX(0.9190);">Connections</span>
<div style="left:1005px;top:97px;width:34px;height:22px;background:#ebedef;border-radius:3px 3px 0 0"></div>
<div style="left:1039px;top:98px;width:1px;height:21px;background:#d3d8db;"></div>
<span id="t96" class="t tb" style="left:1014.7px;top:99.01px;font-size:11.5px;color:#111;transform:scaleX(0.9134);">Git</span>
<div style="left:1040px;top:97px;width:58px;height:22px;background:#ebedef;border-radius:3px 3px 0 0"></div>
<div style="left:1098px;top:98px;width:1px;height:21px;background:#d3d8db;"></div>
<span id="t97" class="t tb" style="left:1050px;top:99.01px;font-size:11.5px;color:#111;transform:scaleX(0.9513);">Tutorial</span>
<svg style="left:1369px;top:104px;" width="32" height="12" viewBox="0 0 32 12"><rect x="0" y="6.200" width="14" height="5.800" rx="1.200" fill="#838d93"/><rect x="1" y="8.700" width="12" height="2.300" fill="#f6f7f8"/><rect x="18" y="0" width="14" height="12" rx="1.200" fill="#838d93"/><rect x="19.300" y="3.300" width="11.400" height="7.400" fill="#e6e7e8" stroke="#eff0f1" stroke-width=".6"/></svg>
<div style="left:778px;top:120px;width:632px;height:21px;background:#f5f7f9;"></div>
<div style="left:778px;top:141px;width:632px;height:1px;background:#d3d8db;"></div>
<svg style="left:784px;top:125px;" width="20" height="13" viewBox="0 0 20 13"><path d="M1.600 2.600c0-.8.500-1.300 1.200-1.300h3l1.300 1.300h5.700c.7 0 1.100.4 1.100 1.100v3H1.600z" fill="#e6c463" stroke="#c8a23e" stroke-width=".7"/><rect x="3" y="2.800" width="9.600" height="4" fill="#f4f4f2" stroke="#d6d6d2" stroke-width=".4"/><path d="M3 5.400h11.800c.7 0 .9.400.7 1l-2 5.200c-.2.600-.6.900-1.300.9H1.100c-.6 0-.9-.4-.6-1l1.800-5.300c.1-.5.300-.8.700-.8z" fill="#f3d77c" stroke="#c9a13a" stroke-width=".7"/><path d="M1 12l2-5.600h11.800" fill="none" stroke="#f9e9a8" stroke-width=".7"/><path d="M9 6.200c1-2.800 3.400-3.800 6-3.400V0.400l4.800 3.700l-4.800 3.700V5.500c-2.200-.4-4-.3-6 .7z" fill="#1fae78"/></svg>
<svg style="left:811px;top:125px;" width="13" height="13" viewBox="0 0 13 13"><rect x="0.500" y="0.500" width="12" height="12" rx=".8" fill="#74a8df" stroke="#5e97d6" stroke-width=".9"/><rect x="2.200" y="0.900" width="8.600" height="5.700" fill="#fdfeff"/><rect x="3" y="8.400" width="7" height="4.200" fill="#fdfeff"/><rect x="4.300" y="9.300" width="1.900" height="3.300" fill="#74a8df"/></svg>
<div style="left:832px;top:122px;width:1px;height:15px;background:#d0d4d7;"></div>
<svg style="left:840px;top:124px;" width="19" height="13" viewBox="0 0 19 13"><rect x="0.5" y="1.5" width="12" height="11" fill="#fdfdfd" stroke="#a8adb3" stroke-width=".8"/><rect x="0.5" y="1.5" width="12" height="2.6" fill="#dfe3e7" stroke="#a8adb3" stroke-width=".8"/><path d="M4.5 1.5v11M8.5 1.5v11M0.5 7h12M0.5 9.8h12" stroke="#b9bec4" stroke-width=".7"/><path transform="translate(0,1.500)" d="M6.400 6.800c1-3.400 3.600-4.600 6.200-4.200V0l5.400 3.900l-5.400 3.800V5.300c-2.200-.4-4.200-.1-6.200 1.500z" fill="#1fae78"/></svg>
<span id="t98" class="t ts" style="left:861.5px;top:121.81px;font-size:11.5px;color:#202020;transform:scaleX(0.9613);">Import Dataset</span>
<svg style="left:940.5px;top:130px;" width="6" height="4" viewBox="0 0 6 4"><path d="M0.200 0H5.600L2.900 3.300z" fill="#222"/></svg>
<div style="left:954px;top:122px;width:1px;height:15px;background:#d0d4d7;"></div>
<svg style="left:961px;top:125px;" width="13" height="13" viewBox="0 0 13 13"><circle cx="6.500" cy="6.500" r="6.100" fill="#e4e5e7"/><path d="M6.500 6.500V0.400a6.100 6.100 0 0 1 -1.100 12.100z" fill="#5a9f91"/><circle cx="6.300" cy="6.500" r=".9" fill="#f4f6f6"/></svg>
<span id="t99" class="t ts" style="left:980.3px;top:121.81px;font-size:11.5px;color:#202020;transform:scaleX(0.9312);">116 MiB</span>
<svg style="left:1025.8px;top:130px;" width="6" height="4" viewBox="0 0 6 4"><path d="M0.200 0H5.600L2.900 3.300z" fill="#222"/></svg>
<div style="left:1039px;top:122px;width:1px;height:15px;background:#d0d4d7;"></div>
<svg style="left:1046.5px;top:122px;" width="16" height="16" viewBox="0 0 16 16"><g opacity="1"><ellipse cx="8.500" cy="14.600" rx="5.500" ry=".9" fill="#000" opacity=".13"/><path d="M15.200 0.800L10.600 5.400" stroke="#d6625d" stroke-width="1.700" stroke-linecap="round"/><path d="M9.400 4L12.200 6.800C11.700 9 11.500 10.800 11.600 12.600L4.600 15.200L0.300 10.900C3.800 9.600 6.800 7.400 9.400 4z" fill="#e3c57e"/><path d="M4.600 15.200L0.300 10.900C2 10.300 3.600 9.400 5 8.400L8 13.900z" fill="#d9b767"/><path d="M8.300 5.300L11.100 8.100M7.300 6.500L10.800 9.900" stroke="#b5803a" stroke-width=".9"/></g></svg>
<svg style="left:1319px;top:126px;" width="11" height="10" viewBox="0 0 11 10"><g stroke="#a2a8ad" stroke-width="1"><path d="M0 0.500h11M0 3.500h11M0 6.500h11M0 9.500h11"/></g></svg>
<span id="t100" class="t ts" style="left:1337px;top:121.81px;font-size:11.5px;color:#202020;transform:scaleX(0.8935);">List</span>
<svg style="left:1359.8px;top:130px;" width="6" height="4" viewBox="0 0 6 4"><path d="M0.200 0H5.600L2.900 3.300z" fill="#222"/></svg>
<div style="left:1373px;top:122px;width:1px;height:15px;background:#d0d4d7;"></div>
<svg style="left:1380px;top:122.5px;" width="15" height="15" viewBox="0 0 15 15"><path d="M12.300 9.600a5.400 5.400 0 1 1-1.300-5.600" fill="none" stroke="#c2cbe6" stroke-width="4"/><path d="M8.600 5.800L14.600 0.600L14.900 7.400z" fill="#dde4f4" stroke="#c2cbe6" stroke-width=".9" stroke-linejoin="round"/><path d="M12.300 9.600a5.400 5.400 0 1 1-1.300-5.600" fill="none" stroke="#dde4f4" stroke-width="2.900"/></svg>
<svg style="left:1399.8px;top:130px;" width="6" height="4" viewBox="0 0 6 4"><path d="M0.200 0H5.600L2.900 3.300z" fill="#222"/></svg>
<div style="left:778px;top:142px;width:632px;height:23px;background:#f5f7f9;"></div>
<div style="left:778px;top:165px;width:632px;height:1px;background:#d3d8db;"></div>
<span id="t101" class="t ts" style="left:786.5px;top:143.81px;font-size:11.5px;color:#202020;transform:scaleX(0.7820);">R</span>
<svg style="left:799.8px;top:152px;" width="6" height="4" viewBox="0 0 6 4"><path d="M0.200 0H5.600L2.900 3.300z" fill="#222"/></svg>
<div style="left:813px;top:145px;width:1px;height:14px;background:#d0d4d7;"></div>
<svg style="left:821.5px;top:146px;" width="16" height="14" viewBox="0 0 16 14"><rect x="3.600" y="0.300" width="8.800" height="8.800" rx="1.800" fill="#b45fc0"/><rect x="6.800" y="5" width="8.800" height="8.800" rx="1.800" fill="#5d8fdc"/><rect x="0.300" y="3.400" width="8.800" height="8.800" rx="1.800" fill="#a9c37c"/></svg>
<span id="t102" class="t ts" style="left:842.5px;top:143.81px;font-size:11.5px;color:#202020;transform:scaleX(0.9455);">Global Environment</span>
<svg style="left:944.8px;top:152px;" width="6" height="4" viewBox="0 0 6 4"><path d="M0.200 0H5.600L2.900 3.300z" fill="#222"/></svg>
<div style="left:1279px;top:146px;width:122px;height:18px;background:#fff;border:1px solid #d0d4d7;border-radius:3px"></div>
<svg style="left:1286px;top:149px;" width="14" height="13" viewBox="0 0 14 13"><circle cx="5.200" cy="5.200" r="3.800" fill="none" stroke="#a7b0b5" stroke-width="2"/><path d="M8.200 8.200L12.600 12" stroke="#a7b0b5" stroke-width="2.600" stroke-linecap="round"/></svg>
<div style="left:778px;top:166px;width:632px;height:20px;background:#f5f7f9;"></div>
<span id="t103" class="t tm" style="left:783px;top:165.75px;font-size:13.333px;color:#000;">Values</span>
<div style="left:778px;top:186px;width:631px;height:1px;background:#d9dcde;"></div>
<span id="t104" class="t tm" style="left:799px;top:185.65px;font-size:13.333px;color:#000;">a</span>
<span id="t105" class="t tm" style="left:961px;top:185.65px;font-size:13.333px;color:#000;">1</span>
<div style="left:955px;top:187px;width:1px;height:17px;background:#d9dcde;"></div>
<div style="left:778px;top:204px;width:631px;height:1px;background:#d9dcde;"></div>
<span id="t106" class="t tm" style="left:799px;top:203.65px;font-size:13.333px;color:#000;">b</span>
<span id="t107" class="t tm" style="left:961px;top:203.65px;font-size:13.333px;color:#000;">-2</span>
<div style="left:955px;top:205px;width:1px;height:17px;background:#d9dcde;"></div>
<div style="left:778px;top:222px;width:631px;height:1px;background:#d9dcde;"></div>
<span id="t108" class="t tm" style="left:799px;top:221.65px;font-size:13.333px;color:#000;">c</span>
<span id="t109" class="t tm" style="left:961px;top:221.65px;font-size:13.333px;color:#000;">3.456</span>
<div style="left:955px;top:223px;width:1px;height:17px;background:#d9dcde;"></div>
<div style="left:778px;top:240px;width:631px;height:1px;background:#d9dcde;"></div>
<div style="left:1409px;top:186px;width:1px;height:55px;background:#d9dcde;"></div>
<div style="left:777px;top:408px;width:634px;height:324px;background:#fff;border:1px solid #d3d8db;border-radius:4px 4px 0 0"></div>
<div style="left:778px;top:409px;width:632px;height:22px;background:#e6e7e9;border-radius:3px 3px 0 0"></div>
<div style="left:778px;top:431px;width:632px;height:1px;background:#d3d8db;"></div>
<div style="left:778px;top:409px;width:41px;height:23px;background:#f5f7f9;border-radius:3px 3px 0 0"></div>
<div style="left:819px;top:410px;width:1px;height:22px;background:#d3d8db;"></div>
<span id="t110" class="t tb" style="left:787.4px;top:411.01px;font-size:11.5px;color:#111;transform:scaleX(0.8620);">Files</span>
<div style="left:820px;top:409px;width:44px;height:22px;background:#ebedef;border-radius:3px 3px 0 0"></div>
<div style="left:864px;top:410px;width:1px;height:21px;background:#d3d8db;"></div>
<span id="t111" class="t tb" style="left:829.6px;top:411.01px;font-size:11.5px;color:#111;transform:scaleX(0.9138);">Plots</span>
<div style="left:865px;top:409px;width:66px;height:22px;background:#ebedef;border-radius:3px 3px 0 0"></div>
<div style="left:931px;top:410px;width:1px;height:21px;background:#d3d8db;"></div>
<span id="t112" class="t tb" style="left:874.6px;top:411.01px;font-size:11.5px;color:#111;transform:scaleX(0.8874);">Packages</span>
<div style="left:932px;top:409px;width:43px;height:22px;background:#ebedef;border-radius:3px 3px 0 0"></div>
<div style="left:975px;top:410px;width:1px;height:21px;background:#d3d8db;"></div>
<span id="t113" class="t tb" style="left:941.6px;top:411.01px;font-size:11.5px;color:#111;transform:scaleX(0.9389);">Help</span>
<div style="left:976px;top:409px;width:54px;height:22px;background:#ebedef;border-radius:3px 3px 0 0"></div>
<div style="left:1030px;top:410px;width:1px;height:21px;background:#d3d8db;"></div>
<span id="t114" class="t tb" style="left:985.6px;top:411.01px;font-size:11.5px;color:#111;transform:scaleX(0.9464);">Viewer</span>
<svg style="left:1369px;top:416px;" width="32" height="12" viewBox="0 0 32 12"><rect x="0" y="6.200" width="14" height="5.800" rx="1.200" fill="#838d93"/><rect x="1" y="8.700" width="12" height="2.300" fill="#f6f7f8"/><rect x="18" y="0" width="14" height="12" rx="1.200" fill="#838d93"/><rect x="19.300" y="3.300" width="11.400" height="7.400" fill="#e6e7e8" stroke="#eff0f1" stroke-width=".6"/></svg>
<div style="left:778px;top:432px;width:632px;height:21px;background:#f5f7f9;"></div>
<div style="left:778px;top:453px;width:632px;height:1px;background:#d3d8db;"></div>
<svg style="left:784px;top:436px;" width="19" height="14" viewBox="0 0 19 14"><g transform="translate(3.400,0.200)"><path d="M6 3.400L8.600 0.700h5.200c1 0 1.600.6 1.600 1.600v9.900H6z" fill="#f6efd2" stroke="#d8c788" stroke-width=".7"/><rect x="7.600" y="2" width="7" height="8.600" fill="#fff" stroke="#dcdcd6" stroke-width=".5"/><path d="M1.400 4h10.800c.8 0 1.200.4 1.200 1.200v7.200c0 .8-.4 1.200-1.200 1.200H1.400c-.6 0-1-.4-1-1V5c0-.6.400-1 1-1z" fill="url(#fg)" stroke="#ddb344" stroke-width=".6"/></g><circle cx="4.8" cy="5" r="4.8" fill="#13a05a"/><path d="M1.7999999999999998 4h2v-2h2v2h2v2h-2v2h-2v-2h-2z" fill="#fff"/></svg>
<span id="t115" class="t ts" style="left:806.8px;top:433.81px;font-size:11.5px;color:#202020;transform:scaleX(0.9386);">New Folder</span>
<div style="left:872px;top:434px;width:1px;height:15px;background:#d0d4d7;"></div>
<svg style="left:879px;top:435px;" width="17" height="15" viewBox="0 0 17 15"><rect x="5.500" y="2.700" width="11" height="11.600" fill="#fff" stroke="#e1e4e7"/><circle cx="5" cy="6.2" r="5" fill="#13a05a"/><path d="M2 5.2h2v-2h2v2h2v2h-2v2h-2v-2h-2z" fill="#fff"/></svg>
<span id="t116" class="t ts" style="left:900.6px;top:433.81px;font-size:11.5px;color:#202020;transform:scaleX(0.9217);">New Blank File</span>
<svg style="left:977.8px;top:442px;" width="6" height="4" viewBox="0 0 6 4"><path d="M0.200 0H5.600L2.900 3.300z" fill="#222"/></svg>
<div style="left:991px;top:434px;width:1px;height:15px;background:#d0d4d7;"></div>
<svg style="left:998px;top:435px;" width="17" height="15" viewBox="0 0 17 15"><rect x="5.500" y="2.700" width="11" height="11.600" fill="#fff" stroke="#e1e4e7"/><circle cx="5" cy="6.200" r="5" fill="#b3201f"/><path d="M2.800 4L7.200 8.400M7.200 4L2.800 8.400" stroke="#fff" stroke-width="1.800"/></svg>
<span id="t117" class="t ts" style="left:1020.6px;top:433.81px;font-size:11.5px;color:#202020;transform:scaleX(0.9353);">Delete</span>
<svg style="left:1064px;top:437px;" width="16" height="13" viewBox="0 0 16 13"><rect x="0.500" y="0.500" width="9" height="9" fill="#fff" stroke="#d5d9dd" stroke-width=".8"/><rect x="6" y="2.500" width="9.500" height="10" fill="#fff" stroke="#c3c8ce" stroke-width=".8"/><path transform="translate(3.6,3.4) scale(0.87)" d="M0 2.700h4.600V0L9.600 4.500L4.600 9V6.300H0z" fill="#1f9be8"/></svg>
<span id="t118" class="t ts" style="left:1085.2px;top:433.81px;font-size:11.5px;color:#202020;transform:scaleX(0.8765);">Rename</span>
<div style="left:1134px;top:434px;width:1px;height:15px;background:#d0d4d7;"></div>
<svg style="left:1143px;top:435px;" width="16" height="16" viewBox="0 0 16 16"><g transform="translate(7.800,7.900)" fill="url(#gg)"><g fill="#3aa6d6"><rect x="-1.800" y="-7.800" width="3.600" height="4.200" rx="1.100" transform="rotate(0)"/><rect x="-1.800" y="-7.800" width="3.600" height="4.200" rx="1.100" transform="rotate(45)"/><rect x="-1.800" y="-7.800" width="3.600" height="4.200" rx="1.100" transform="rotate(90)"/><rect x="-1.800" y="-7.800" width="3.600" height="4.200" rx="1.100" transform="rotate(135)"/><rect x="-1.800" y="-7.800" width="3.600" height="4.200" rx="1.100" transform="rotate(180)"/><rect x="-1.800" y="-7.800" width="3.600" height="4.200" rx="1.100" transform="rotate(225)"/><rect x="-1.800" y="-7.800" width="3.600" height="4.200" rx="1.100" transform="rotate(270)"/><rect x="-1.800" y="-7.800" width="3.600" height="4.200" rx="1.100" transform="rotate(315)"/></g><circle r="5.700"/><circle r="2.200" fill="#f2f9fc" stroke="#2f8fc6" stroke-width=".5"/></g></svg>
<span id="t119" class="t ts" style="left:1163.6px;top:433.81px;font-size:11.5px;color:#202020;transform:scaleX(0.9694);">More</span>
<svg style="left:1195.8px;top:442px;" width="6" height="4" viewBox="0 0 6 4"><path d="M0.200 0H5.600L2.900 3.300z" fill="#222"/></svg>
<svg style="left:1389px;top:435.5px;" width="15" height="15" viewBox="0 0 15 15"><path d="M12.300 9.600a5.400 5.400 0 1 1-1.300-5.600" fill="none" stroke="#c2cbe6" stroke-width="4"/><path d="M8.600 5.800L14.600 0.600L14.900 7.400z" fill="#dde4f4" stroke="#c2cbe6" stroke-width=".9" stroke-linejoin="round"/><path d="M12.300 9.600a5.400 5.400 0 1 1-1.300-5.600" fill="none" stroke="#dde4f4" stroke-width="2.900"/></svg>
<div style="left:778px;top:454px;width:632px;height:20px;background:#f5f7f9;"></div>
<div style="left:778px;top:474px;width:632px;height:1px;background:#d3d8db;"></div>
<div style="left:782px;top:459px;width:12.5px;height:12.5px;background:#fff;border:1px solid #969696;border-radius:3px"></div>
<svg style="left:798.8px;top:460px;" width="6" height="10" viewBox="0 0 6 10"><path d="M0.600 0.600L5 5L0.600 9.400" fill="none" stroke="#b3b8bd" stroke-width="1"/></svg>
<span id="t120" class="t ts" style="left:810.6px;top:453.81px;font-size:11.5px;color:#3b50b8;transform:scaleX(0.7739);">C:</span>
<svg style="left:825.6px;top:460px;" width="6" height="10" viewBox="0 0 6 10"><path d="M0.600 0.600L5 5L0.600 9.400" fill="none" stroke="#b3b8bd" stroke-width="1"/></svg>
<span id="t121" class="t ts" style="left:837.3px;top:453.81px;font-size:11.5px;color:#3b50b8;transform:scaleX(0.9522);">Git</span>
<svg style="left:856.8px;top:460px;" width="6" height="10" viewBox="0 0 6 10"><path d="M0.600 0.600L5 5L0.600 9.400" fill="none" stroke="#b3b8bd" stroke-width="1"/></svg>
<span id="t122" class="t ts" style="left:868.2px;top:453.81px;font-size:11.5px;color:#3b50b8;transform:scaleX(1.0356);">r-intro</span>
<svg style="left:1368px;top:456px;" width="15" height="15" viewBox="0 0 15 15"><g opacity="1"><path d="M7.500 0.300L14.600 2.800v8.900L7.500 14.700L0.400 11.700V2.800z" fill="#bfe5f4" stroke="#86cbe8" stroke-width=".7"/><path d="M0.400 2.800L7.500 5.400L14.600 2.800L7.500 0.300z" fill="#d2eef8" stroke="#93d2ec" stroke-width=".5"/><path d="M7.500 5.400V14.700M0.400 11.700L7.500 9.200L14.600 11.700" fill="none" stroke="#9bd6ee" stroke-width=".5"/><text x="7.900" y="10.100" font-family="Liberation Serif,serif" font-size="10.500" text-anchor="middle" fill="#3b78b8">R</text></g></svg>
<div style="left:1390px;top:454px;width:1px;height:20px;background:#d3d8db;"></div>
<span id="t123" class="t ts" style="left:1396.5px;top:453.81px;font-size:11.5px;color:#555;transform:scaleX(1.0215);">...</span>
<div style="left:778px;top:475px;width:632px;height:18px;background:#f5f7f9;"></div>
<div style="left:778px;top:493px;width:632px;height:1px;background:#d3d8db;"></div>
<div style="left:807px;top:475px;width:1px;height:18px;background:#d3d8db;"></div>
<div style="left:833px;top:475px;width:1px;height:18px;background:#d3d8db;"></div>
<div style="left:1313px;top:475px;width:1px;height:18px;background:#d3d8db;"></div>
<div style="left:1378px;top:475px;width:1px;height:18px;background:#d3d8db;"></div>
<svg style="left:839px;top:481px;" width="10" height="7" viewBox="0 0 10 7"><path d="M0 6.600H9.600L4.800 0z" fill="#7a838c"/></svg>
<span id="t124" class="t ts" style="left:853.8px;top:473.61px;font-size:11.5px;color:#4a4f55;transform:scaleX(0.9189);">Name</span>
<span id="t125" class="t ts" style="left:1316.6px;top:473.61px;font-size:11.5px;color:#4a4f55;transform:scaleX(0.8447);">Size</span>
<div style="left:1378px;top:475px;width:31px;height:18px;overflow:hidden">
<span id="t126" class="t ts" style="left:3.6px;top:-1.39px;font-size:11.5px;color:#4a4f55;">Modified</span>
</div>
<div style="left:778px;top:494px;width:631px;height:237px;overflow:hidden">
<svg style="left:37px;top:3.1999999999999886px;" width="13" height="13" viewBox="0 0 13 13"><path d="M5.600 0.200L10.800 5.800H7.600V9.800H12.800V12.800H3.600V5.800H0.400z" fill="#17a85f"/></svg>
<span id="t127" class="t ts" style="left:59.299999999999955px;top:2.07px;font-size:12.5px;color:#2a1fa0;transform:scaleX(0.8198);">..</span>
<div style="left:11.200000000000045px;top:28.79999999999998px;width:12.5px;height:12.5px;background:#fff;border:1px solid #969696;border-radius:3px"></div>
<svg style="left:35.5px;top:26.199999999999978px;" width="16" height="14" viewBox="0 0 16 14"><path d="M6 3.400L8.600 0.700h5.200c1 0 1.600.6 1.600 1.600v9.900H6z" fill="#f6efd2" stroke="#d8c788" stroke-width=".7"/><rect x="7.600" y="2" width="7" height="8.600" fill="#fff" stroke="#dcdcd6" stroke-width=".5"/><path d="M1.400 4h10.800c.8 0 1.200.4 1.200 1.200v7.200c0 .8-.4 1.200-1.200 1.200H1.400c-.6 0-1-.4-1-1V5c0-.6.400-1 1-1z" fill="url(#fg)" stroke="#ddb344" stroke-width=".6"/></svg>
<span id="t128" class="t ts" style="left:59.299999999999955px;top:25.07px;font-size:12.5px;color:#2a1fa0;transform:scaleX(0.9888);">.git</span>
<div style="left:11.200000000000045px;top:51.79999999999998px;width:12.5px;height:12.5px;background:#fff;border:1px solid #969696;border-radius:3px"></div>
<svg style="left:35px;top:48.79999999999998px;" width="16" height="15" viewBox="0 0 16 15"><g transform="translate(2.600,0)"><path d="M0.5 0.5H8.6L12.5 4.4V14.0H0.5z" fill="#fff" stroke="#b4b7ba" stroke-width=".8"/><path d="M8.6 0.5V4.4H12.5" fill="#eef0f2" stroke="#b4b7ba" stroke-width=".7"/></g><path d="M4.600 2L9.200 6.600L4.600 11.200L0 6.600z" fill="#e8452c"/><path d="M3.400 4.400L5.800 6.800M4.600 5.600V8.400" stroke="#fff" stroke-width="1"/></svg>
<span id="t129" class="t ts" style="left:59.299999999999955px;top:48.07px;font-size:12.5px;color:#2a1fa0;transform:scaleX(0.9857);">.gitignore</span>
<span id="t130" class="t ts" style="left:539px;top:48.41px;font-size:11.5px;color:#222;transform:scaleX(0.9746);">718 B</span>
<span id="t131" class="t ts" style="left:604px;top:48.41px;font-size:11.5px;color:#222;transform:scaleX(0.9935);">Feb</span>
<div style="left:627.5999999999999px;top:53.99999999999998px;width:0.8px;height:1px;background:#b08a70;"></div>
<div style="left:11.200000000000045px;top:74.79999999999998px;width:12.5px;height:12.5px;background:#fff;border:1px solid #969696;border-radius:3px"></div>
<svg style="left:35px;top:71.79999999999998px;" width="16" height="15" viewBox="0 0 16 15"><g transform="translate(2.600,0)"><path d="M0.5 0.5H8.6L12.5 4.4V14.0H0.5z" fill="#fff" stroke="#b4b7ba" stroke-width=".8"/><path d="M8.6 0.5V4.4H12.5" fill="#eef0f2" stroke="#b4b7ba" stroke-width=".7"/></g><path d="M0.400 3.600c0-2 8-2 8 0v7c0 2-8 2-8 0z" fill="#18957a"/><ellipse cx="4.400" cy="3.600" rx="4" ry="1.500" fill="#3cc0a0"/><text x="4.400" y="10.400" font-family="Liberation Sans,sans-serif" font-weight="bold" font-size="6.500" text-anchor="middle" fill="#fff">R</text></svg>
<span id="t132" class="t ts" style="left:59.299999999999955px;top:71.07px;font-size:12.5px;color:#2a1fa0;transform:scaleX(0.8739);">.RData</span>
<span id="t133" class="t ts" style="left:539px;top:71.41px;font-size:11.5px;color:#222;transform:scaleX(0.9424);">3 KB</span>
<span id="t134" class="t ts" style="left:604px;top:71.41px;font-size:11.5px;color:#222;transform:scaleX(1.0902);">Mar</span>
<div style="left:11.200000000000045px;top:97.79999999999998px;width:12.5px;height:12.5px;background:#fff;border:1px solid #969696;border-radius:3px"></div>
<svg style="left:35px;top:94.79999999999998px;" width="16" height="15" viewBox="0 0 16 15"><g transform="translate(2.600,0)"><path d="M0.5 0.5H8.6L12.5 4.4V14.0H0.5z" fill="#fff" stroke="#b4b7ba" stroke-width=".8"/><path d="M8.6 0.5V4.4H12.5" fill="#eef0f2" stroke="#b4b7ba" stroke-width=".7"/></g><circle cx="4.600" cy="6.400" r="4.200" fill="#fff" stroke="#9aa0a6" stroke-width=".8"/><path d="M4.600 3.800V6.600H6.600" fill="none" stroke="#333" stroke-width=".9"/></svg>
<span id="t135" class="t ts" style="left:59.299999999999955px;top:94.07px;font-size:12.5px;color:#2a1fa0;transform:scaleX(0.9264);">.Rhistory</span>
<span id="t136" class="t ts" style="left:539px;top:94.41px;font-size:11.5px;color:#222;transform:scaleX(0.9604);">36.2 KB</span>
<span id="t137" class="t ts" style="left:604px;top:94.41px;font-size:11.5px;color:#222;transform:scaleX(1.0902);">Mar</span>
<div style="left:11.200000000000045px;top:120.79999999999998px;width:12.5px;height:12.5px;background:#fff;border:1px solid #969696;border-radius:3px"></div>
<svg style="left:35.5px;top:118.19999999999999px;" width="16" height="14" viewBox="0 0 16 14"><path d="M6 3.400L8.600 0.700h5.200c1 0 1.600.6 1.600 1.600v9.900H6z" fill="#f6efd2" stroke="#d8c788" stroke-width=".7"/><rect x="7.600" y="2" width="7" height="8.600" fill="#fff" stroke="#dcdcd6" stroke-width=".5"/><path d="M1.400 4h10.800c.8 0 1.200.4 1.200 1.200v7.200c0 .8-.4 1.200-1.200 1.200H1.400c-.6 0-1-.4-1-1V5c0-.6.400-1 1-1z" fill="url(#fg)" stroke="#ddb344" stroke-width=".6"/></svg>
<span id="t138" class="t ts" style="left:59.299999999999955px;top:117.07px;font-size:12.5px;color:#2a1fa0;transform:scaleX(0.9110);">.Rproj.user</span>
<div style="left:11.200000000000045px;top:143.79999999999995px;width:12.5px;height:12.5px;background:#fff;border:1px solid #969696;border-radius:3px"></div>
<svg style="left:35.5px;top:141.19999999999996px;" width="16" height="14" viewBox="0 0 16 14"><path d="M6 3.400L8.600 0.700h5.200c1 0 1.600.6 1.600 1.600v9.900H6z" fill="#f6efd2" stroke="#d8c788" stroke-width=".7"/><rect x="7.600" y="2" width="7" height="8.600" fill="#fff" stroke="#dcdcd6" stroke-width=".5"/><path d="M1.400 4h10.800c.8 0 1.200.4 1.200 1.200v7.200c0 .8-.4 1.200-1.200 1.200H1.400c-.6 0-1-.4-1-1V5c0-.6.400-1 1-1z" fill="url(#fg)" stroke="#ddb344" stroke-width=".6"/></svg>
<span id="t139" class="t ts" style="left:59.299999999999955px;top:140.07px;font-size:12.5px;color:#2a1fa0;transform:scaleX(0.9922);">img</span>
<div style="left:11.200000000000045px;top:166.79999999999995px;width:12.5px;height:12.5px;background:#fff;border:1px solid #969696;border-radius:3px"></div>
<svg style="left:35.5px;top:164.19999999999996px;" width="16" height="14" viewBox="0 0 16 14"><path d="M6 3.400L8.600 0.700h5.200c1 0 1.600.6 1.600 1.600v9.900H6z" fill="#f6efd2" stroke="#d8c788" stroke-width=".7"/><rect x="7.600" y="2" width="7" height="8.600" fill="#fff" stroke="#dcdcd6" stroke-width=".5"/><path d="M1.400 4h10.800c.8 0 1.200.4 1.200 1.200v7.200c0 .8-.4 1.200-1.200 1.200H1.400c-.6 0-1-.4-1-1V5c0-.6.400-1 1-1z" fill="url(#fg)" stroke="#ddb344" stroke-width=".6"/></svg>
<span id="t140" class="t ts" style="left:59.299999999999955px;top:163.07px;font-size:12.5px;color:#2a1fa0;transform:scaleX(0.9354);">latex</span>
<div style="left:11.200000000000045px;top:189.79999999999995px;width:12.5px;height:12.5px;background:#fff;border:1px solid #969696;border-radius:3px"></div>
<svg style="left:36px;top:187.79999999999995px;" width="15" height="15" viewBox="0 0 15 15"><g opacity="1"><path d="M7.500 0.300L14.600 2.800v8.900L7.500 14.700L0.400 11.700V2.800z" fill="#bfe5f4" stroke="#86cbe8" stroke-width=".7"/><path d="M0.400 2.800L7.500 5.400L14.600 2.800L7.500 0.300z" fill="#d2eef8" stroke="#93d2ec" stroke-width=".5"/><path d="M7.500 5.400V14.700M0.400 11.700L7.500 9.200L14.600 11.700" fill="none" stroke="#9bd6ee" stroke-width=".5"/><text x="7.900" y="10.100" font-family="Liberation Serif,serif" font-size="10.500" text-anchor="middle" fill="#3b78b8">R</text></g></svg>
<span id="t141" class="t ts" style="left:59.299999999999955px;top:186.07px;font-size:12.5px;color:#2a1fa0;transform:scaleX(0.9848);">r-intro.Rproj</span>
<span id="t142" class="t ts" style="left:539px;top:186.41px;font-size:11.5px;color:#222;transform:scaleX(0.9813);">218 B</span>
<span id="t143" class="t ts" style="left:604px;top:186.41px;font-size:11.5px;color:#222;transform:scaleX(1.0902);">Mar</span>
<div style="left:11.200000000000045px;top:212.79999999999995px;width:12.5px;height:12.5px;background:#fff;border:1px solid #969696;border-radius:3px"></div>
<svg style="left:35px;top:209.79999999999995px;" width="16" height="15" viewBox="0 0 16 15"><g transform="translate(2.600,0)"><path d="M0.5 0.5H8.6L12.5 4.4V14.0H0.5z" fill="#fff" stroke="#b4b7ba" stroke-width=".8"/><path d="M8.6 0.5V4.4H12.5" fill="#eef0f2" stroke="#b4b7ba" stroke-width=".7"/></g><text x="-.4" y="11.600" font-family="Liberation Sans,sans-serif" font-weight="bold" font-size="6.800" fill="#8b1a8b" textLength="11" lengthAdjust="spacingAndGlyphs">MD</text></svg>
<span id="t144" class="t ts" style="left:59.299999999999955px;top:209.07px;font-size:12.5px;color:#2a1fa0;transform:scaleX(0.8880);">README.md</span>
<span id="t145" class="t ts" style="left:539px;top:209.41px;font-size:11.5px;color:#222;transform:scaleX(0.9843);">84 B</span>
<span id="t146" class="t ts" style="left:604px;top:209.41px;font-size:11.5px;color:#222;transform:scaleX(0.9935);">Feb</span>
<div style="left:627.5999999999999px;top:214.99999999999997px;width:0.8px;height:1px;background:#b08a70;"></div>
<div style="left:11.200000000000045px;top:235.79999999999995px;width:12.5px;height:12.5px;background:#fff;border:1px solid #969696;border-radius:3px"></div>
<svg style="left:35.5px;top:233.19999999999996px;" width="16" height="14" viewBox="0 0 16 14"><path d="M6 3.400L8.600 0.700h5.200c1 0 1.600.6 1.600 1.600v9.900H6z" fill="#f6efd2" stroke="#d8c788" stroke-width=".7"/><rect x="7.600" y="2" width="7" height="8.600" fill="#fff" stroke="#dcdcd6" stroke-width=".5"/><path d="M1.400 4h10.800c.8 0 1.200.4 1.200 1.200v7.200c0 .8-.4 1.200-1.200 1.200H1.400c-.6 0-1-.4-1-1V5c0-.6.400-1 1-1z" fill="url(#fg)" stroke="#ddb344" stroke-width=".6"/></svg>
</div>
<div style="left:1393px;top:494px;width:17px;height:237px;background:rgba(240,240,240,.45);"></div>
<svg style="left:1398px;top:500.5px;" width="8" height="5" viewBox="0 0 8 5"><path d="M0 4.200H7.600L3.800 0z" fill="#c4c4c4"/></svg>
<svg style="left:1398px;top:720.5px;" width="8" height="5" viewBox="0 0 8 5"><path d="M0 0H7.600L3.800 4.200z" fill="#8a8a8a"/></svg>
<div style="left:1395px;top:511px;width:13px;height:189px;background:rgba(197,197,197,.78);"></div>
</div></body></html>
